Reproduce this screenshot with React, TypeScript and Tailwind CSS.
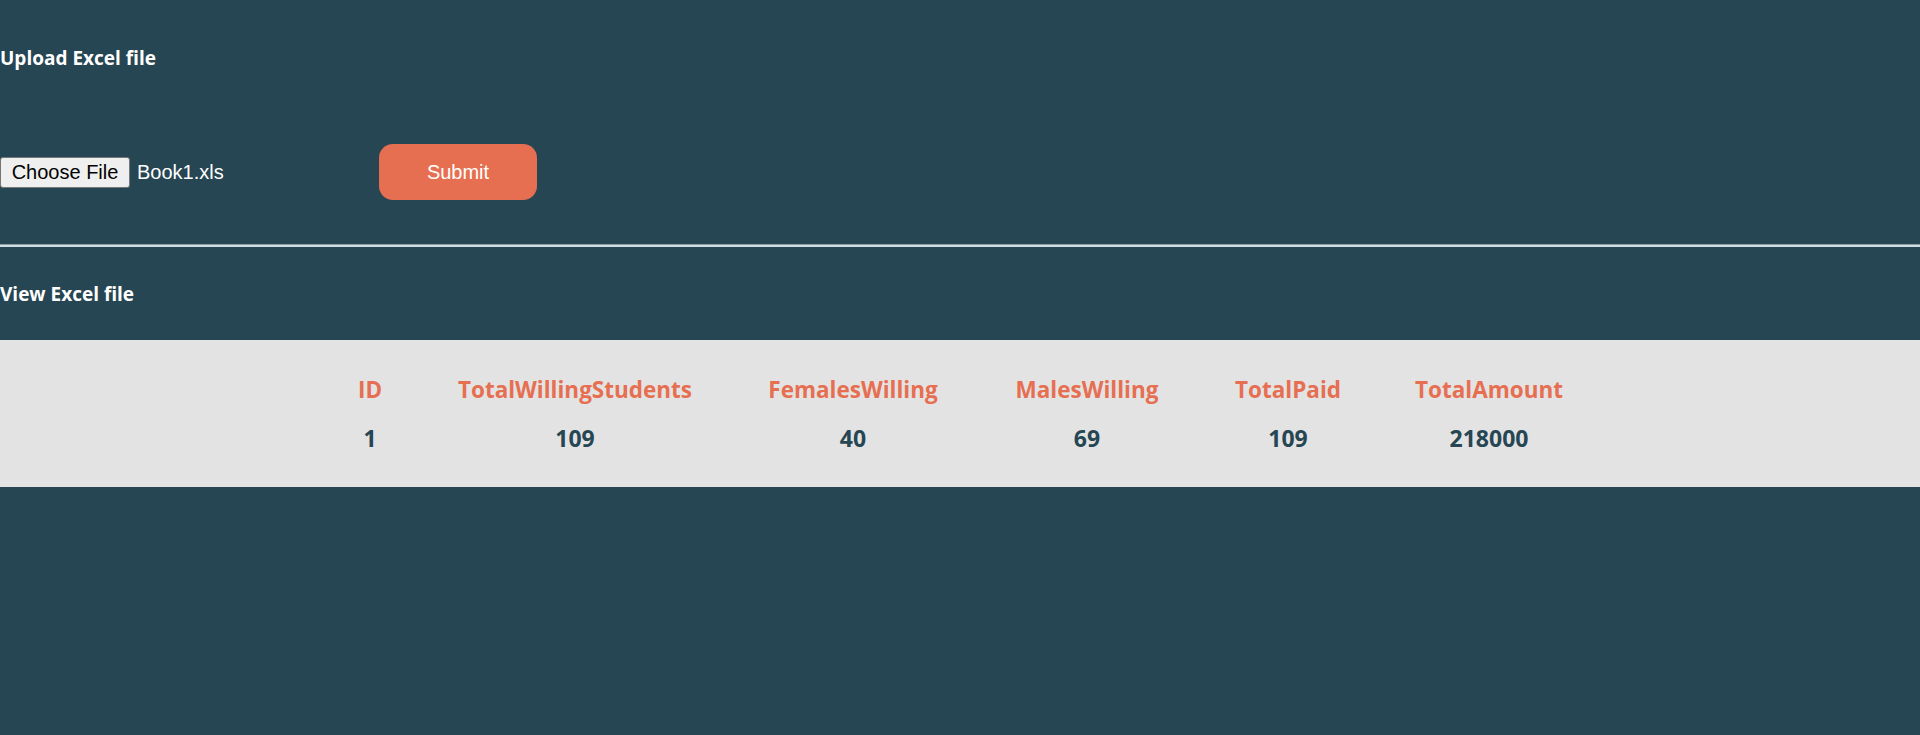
const columns = [
  { key: "ID", width: "w-[100px]" },
  { key: "TotalWillingStudents", width: "w-[310px]" },
  { key: "FemalesWilling", width: "w-[246px]" },
  { key: "MalesWilling", width: "w-[222px]" },
  { key: "TotalPaid", width: "w-[180px]" },
  { key: "TotalAmount", width: "w-[222px]" },
];

const rows = [
  {
    ID: 1,
    TotalWillingStudents: 109,
    FemalesWilling: 40,
    MalesWilling: 69,
    TotalPaid: 109,
    TotalAmount: 218000,
  },
];

const App = () => {
  return (
    <div className="min-h-screen bg-[#264653] font-['Open_Sans',sans-serif]">
      {/* Upload */}
      <section>
        <h3 className="pt-[45px] text-[19px] leading-[26px] font-bold text-white">
          Upload Excel file
        </h3>
        <form className="mt-[73px] flex items-center">
          <div className="flex items-center w-[379px] font-['Liberation_Sans',Arial,sans-serif] text-[20px]">
            <button
              type="button"
              className="w-[130px] h-[31px] bg-[#efefef] border border-[#767676] rounded-[3px] text-black text-center leading-none"
            >
              Choose File
            </button>
            <span className="ml-[7px] text-white">Book1.xls</span>
          </div>
          <button
            type="button"
            className="w-[158px] h-[56px] rounded-[14px] bg-[#e76f51] text-white text-[20px] font-['Liberation_Sans',Arial,sans-serif]"
          >
            Submit
          </button>
        </form>
      </section>

      <hr className="mt-[44px] h-0 border-0 border-t border-t-[#8c9ca2] border-b-2 border-b-[#cfdce1]" />

      {/* View */}
      <h3 className="mt-[34px] text-[19px] leading-[26px] font-bold text-white">
        View Excel file
      </h3>

      <div className="mt-[33px] bg-[#e3e3e3] pt-[26px] pb-[25px]">
        <table className="mx-auto w-[1280px] table-fixed border-collapse">
          <thead>
            <tr className="h-[48px]">
              {columns.map((col) => (
                <th
                  key={col.key}
                  className={`${col.width} p-0 text-center text-[22.5px] font-bold text-[#e76f51]`}
                >
                  {col.key}
                </th>
              ))}
            </tr>
          </thead>
          <tbody>
            {rows.map((row) => (
              <tr key={row.ID} className="h-[48px]">
                {columns.map((col) => (
                  <td
                    key={col.key}
                    className="p-0 text-center text-[23px] font-bold text-[#264653]"
                  >
                    {row[col.key as keyof typeof row]}
                  </td>
                ))}
              </tr>
            ))}
          </tbody>
        </table>
      </div>
    </div>
  );
};

export default App;
